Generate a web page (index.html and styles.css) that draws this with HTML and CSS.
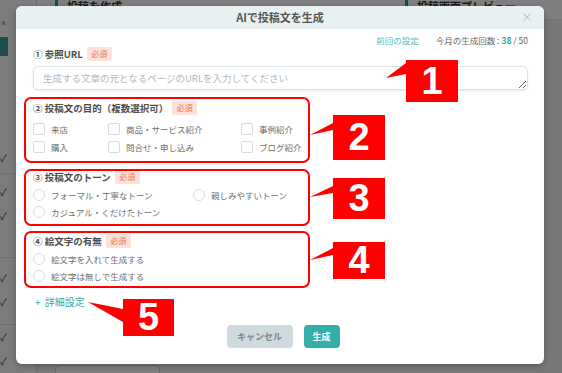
FILE: index.html
```html
<!DOCTYPE html>
<html lang="ja">
  <head>
    <meta charset="UTF-8" />
    <meta name="viewport" content="width=device-width, initial-scale=1" />
    <title>AIで投稿文を生成</title>
    <link rel="stylesheet" href="styles.css">
  </head>
  <body>
    <!-- page behind the dialog -->
    <div class="page">
      <aside class="side">
        <div class="side-toggle">^</div>
        <div class="side-active"></div>
        <div class="side-group side-group-1"><span class="side-check">✓</span></div>
        <div class="side-group side-group-2"><span class="side-check">✓</span><span class="side-check">✓</span></div>
        <div class="side-group side-group-3"><span class="side-check">✓</span><span class="side-check">✓</span></div>
        <div class="side-group side-group-4"><span class="side-check">✓</span><span class="side-check">✓</span></div>
      </aside>
      <main class="main">
        <div class="main-head">
          <div class="pane-title">投稿を作成</div>
          <div class="pane-title pane-title-right">投稿画面プレビュー</div>
        </div>
        <div class="main-foot">
          <div class="foot-card"></div>
        </div>
      </main>
    </div>
    <div class="overlay"></div>

    <div class="modal">
      <div class="modal-head">
        <h2 class="modal-title">AIで投稿文を生成</h2>
        <span class="modal-close">×</span>
      </div>
      <div class="modal-body">
        <div class="meta">
          <a class="meta-link">前回の設定</a>
          <span class="meta-count">今月の生成回数 : <b>38</b> / 50</span>
        </div>

        <section class="field">
          <div class="field-label">① 参照URL<span class="req">必須</span></div>
          <textarea class="url-input" placeholder="生成する文章の元となるページのURLを入力してください"></textarea>
        </section>

        <section class="field field-purpose">
          <div class="field-label">② 投稿文の目的（複数選択可）<span class="req">必須</span></div>
          <div class="choices choices-check">
            <label class="choice"><input type="checkbox" />来店</label>
            <label class="choice"><input type="checkbox" />商品・サービス紹介</label>
            <label class="choice"><input type="checkbox" />事例紹介</label>
            <label class="choice"><input type="checkbox" />購入</label>
            <label class="choice"><input type="checkbox" />問合せ・申し込み</label>
            <label class="choice"><input type="checkbox" />ブログ紹介</label>
          </div>
        </section>

        <section class="field">
          <div class="field-label">③ 投稿文のトーン<span class="req">必須</span></div>
          <div class="choices choices-radio">
            <label class="choice"><input type="radio" name="tone" />フォーマル・丁寧なトーン</label>
            <label class="choice"><input type="radio" name="tone" />親しみやすいトーン</label>
            <label class="choice"><input type="radio" name="tone" />カジュアル・くだけたトーン</label>
          </div>
        </section>

        <section class="field">
          <div class="field-label">④ 絵文字の有無<span class="req">必須</span></div>
          <div class="choices choices-single">
            <label class="choice"><input type="radio" name="emoji" />絵文字を入れて生成する</label>
            <label class="choice"><input type="radio" name="emoji" />絵文字は無しで生成する</label>
          </div>
        </section>

        <a class="more-link">+ 詳細設定</a>

        <div class="actions">
          <button class="btn btn-cancel">キャンセル</button>
          <button class="btn btn-primary">生成</button>
        </div>
      </div>
    </div>

    <!-- red annotation marks -->
    <div class="notes">
      <div class="note-frame frame-2"></div>
      <div class="note-frame frame-3"></div>
      <div class="note-frame frame-4"></div>
      <svg class="note-arrows" width="562" height="373" viewBox="0 0 562 373">
        <polygon points="386,78 406,63 406,74" />
        <polygon points="310,135 333,123 333,130" />
        <polygon points="310,197 333,186 333,193" />
        <polygon points="310,260 333,248 333,255" />
        <polygon points="88,302 123,309 123,322" />
      </svg>
      <div class="note-num num-1">1</div>
      <div class="note-num num-2">2</div>
      <div class="note-num num-3">3</div>
      <div class="note-num num-4">4</div>
      <div class="note-num num-5">5</div>
    </div>
  </body>
</html>
```

FILE: styles.css
```css
* {
  box-sizing: border-box;
}

body {
  margin: 0;
  width: 562px;
  height: 373px;
  overflow: hidden;
  position: relative;
  font-family: "Noto Sans CJK JP", "Noto Sans", sans-serif;
  background-color: #fff;
}

/* background page */
.page {
  display: flex;
  height: 373px;
}

.side {
  width: 37px;
  background-color: #f9f9f9;
  border-right: 1px solid #d8d8d8;
  display: flex;
  flex-direction: column;
}

.side-toggle {
  height: 28px;
  padding-top: 20px;
  padding-left: 1px;
  font-size: 9px;
  line-height: 10px;
  color: #444;
}

.side-active {
  width: 8px;
  height: 24px;
  margin-top: 9px;
  background-color: #3d9f98;
}

.side-group {
  display: flex;
  flex-direction: column;
  border-bottom: 1px solid #e0e0e0;
}

.side-check {
  height: 24px;
  line-height: 24px;
  font-size: 10px;
  color: #333;
}

.side-group-1 {
  margin-top: 90px;
  padding-bottom: 3px;
}

.side-group-2 {
  padding-top: 6px;
  padding-bottom: 29px;
}

.side-group-3 {
  padding-top: 8px;
  padding-bottom: 10px;
}

.side-group-4 {
  border-bottom: none;
}

.main {
  flex: 1;
  background-color: #eef1f2;
  display: flex;
  flex-direction: column;
  justify-content: space-between;
}

.main-head {
  display: flex;
  height: 20px;
  padding-left: 18px;
  background-color: #fff;
  border-bottom: 1px solid #dde2e4;
}

.pane-title {
  width: 350px;
  border-left: 3px solid #2f9e96;
  padding-left: 9px;
  font-size: 11px;
  font-weight: bold;
  line-height: 12px;
  height: 12px;
  color: #333;
}

.pane-title-right {
  width: auto;
}

.main-foot {
  height: 8px;
  padding-left: 18px;
}

.foot-card {
  width: 105px;
  height: 8px;
  background-color: #fff;
  border: 1px solid #cfd5d8;
  border-bottom: none;
  border-radius: 5px 5px 0 0;
}

.overlay {
  position: absolute;
  inset: 0;
  background-color: rgba(0, 0, 0, 0.5);
}

/* dialog */
.modal {
  position: absolute;
  left: 16px;
  top: 6px;
  width: 528px;
  background-color: #fff;
  border-radius: 6px;
  overflow: hidden;
  box-shadow: 0 2px 6px rgba(0, 0, 0, 0.25);
}

.modal-head {
  position: relative;
  height: 23px;
  background-color: #e8f1f2;
}

.modal-title {
  margin: 0;
  font-size: 11px;
  line-height: 23px;
  font-weight: bold;
  text-align: center;
  color: #555;
}

.modal-close {
  position: absolute;
  right: 11px;
  top: 0;
  font-size: 12px;
  line-height: 21px;
  color: #b9bfc1;
}

.modal-body {
  padding: 5px 16px 16px 17px;
}

.meta {
  display: flex;
  justify-content: flex-end;
  gap: 17px;
  height: 12px;
  font-size: 8.5px;
  line-height: 12px;
  color: #666;
}

.meta-link {
  color: #5cb9b4;
}

.meta-count b {
  color: #2ea7a1;
}

.field {
  margin-top: 14px;
}

.field:first-of-type {
  margin-top: 1px;
}

.field-purpose {
  margin-top: 11px;
}

.field-label {
  display: flex;
  align-items: center;
  height: 14px;
  font-size: 9.5px;
  font-weight: bold;
  color: #4d4d4d;
}

.req {
  margin-left: 4px;
  padding: 0 4.5px;
  height: 14px;
  line-height: 14px;
  font-size: 8px;
  font-weight: normal;
  color: #f0704f;
  background-color: #fde2d8;
  border-radius: 2px;
}

.url-input {
  display: block;
  width: 495px;
  height: 24px;
  margin-top: 5px;
  padding: 5px 9px;
  font-family: inherit;
  font-size: 9.5px;
  line-height: 12px;
  border: 1px solid #dbe2e5;
  border-radius: 5px;
  box-shadow: 0 1px 2px rgba(0, 0, 0, 0.08);
  resize: vertical;
}

.url-input::placeholder {
  color: #b2b6b8;
}

.choices {
  display: grid;
}

.choices-check {
  grid-template-columns: 75px 133px auto;
  grid-auto-rows: 18px;
  margin-top: 5px;
}

.choices-radio {
  grid-template-columns: 160px auto;
  grid-auto-rows: 17px;
  margin-top: 2px;
}

.choices-single {
  grid-auto-rows: 17px;
  margin-top: 2px;
}

.choice {
  display: flex;
  align-items: center;
  gap: 6px;
  font-size: 8.5px;
  color: #6d6d6d;
}

.choice input {
  appearance: none;
  margin: 0;
  width: 12px;
  height: 12px;
  background-color: #fff;
  border: 1px solid #d5dde1;
}

.choice input[type="checkbox"] {
  border-radius: 2px;
}

.choice input[type="radio"] {
  border-radius: 50%;
}

.more-link {
  display: block;
  margin-top: 12px;
  padding-left: 2px;
  height: 12px;
  font-size: 10px;
  line-height: 12px;
  word-spacing: 2px;
  color: #3aa9a5;
}

.actions {
  display: flex;
  justify-content: center;
  gap: 11px;
  margin-top: 17px;
  padding-left: 5px;
}

.btn {
  height: 23px;
  padding: 0 9px;
  font-family: inherit;
  font-size: 9px;
  font-weight: bold;
  border: none;
  border-radius: 4px;
}

.btn-cancel {
  width: 66px;
  color: #7b878c;
  background-color: #cfdadf;
}

.btn-primary {
  width: 36px;
  color: #fff;
  background-color: #34aea8;
}

/* annotations */
.notes {
  position: absolute;
  inset: 0;
  pointer-events: none;
}

.note-frame {
  position: absolute;
  left: 24px;
  width: 286px;
  border: 2px solid #f00;
  border-radius: 7px;
}

.frame-2 {
  top: 97px;
  height: 66px;
}

.frame-3 {
  top: 169px;
  height: 57px;
}

.frame-4 {
  top: 231px;
  height: 57px;
}

.note-arrows {
  position: absolute;
  left: 0;
  top: 0;
}

.note-arrows polygon {
  fill: #f00;
}

.note-num {
  position: absolute;
  width: 52px;
  display: flex;
  align-items: center;
  justify-content: center;
  background-color: #f00;
  color: #fff;
  font-family: "Liberation Sans", Arial, sans-serif;
  font-weight: bold;
  font-size: 38px;
}

.num-1 {
  left: 406px;
  top: 60px;
  height: 42px;
}

.num-2 {
  left: 333px;
  top: 115px;
  height: 45px;
}

.num-3 {
  left: 333px;
  top: 178px;
  height: 41px;
}

.num-4 {
  left: 333px;
  top: 242px;
  height: 37px;
}

.num-5 {
  left: 123px;
  top: 299px;
  width: 51px;
  height: 37px;
}
```
